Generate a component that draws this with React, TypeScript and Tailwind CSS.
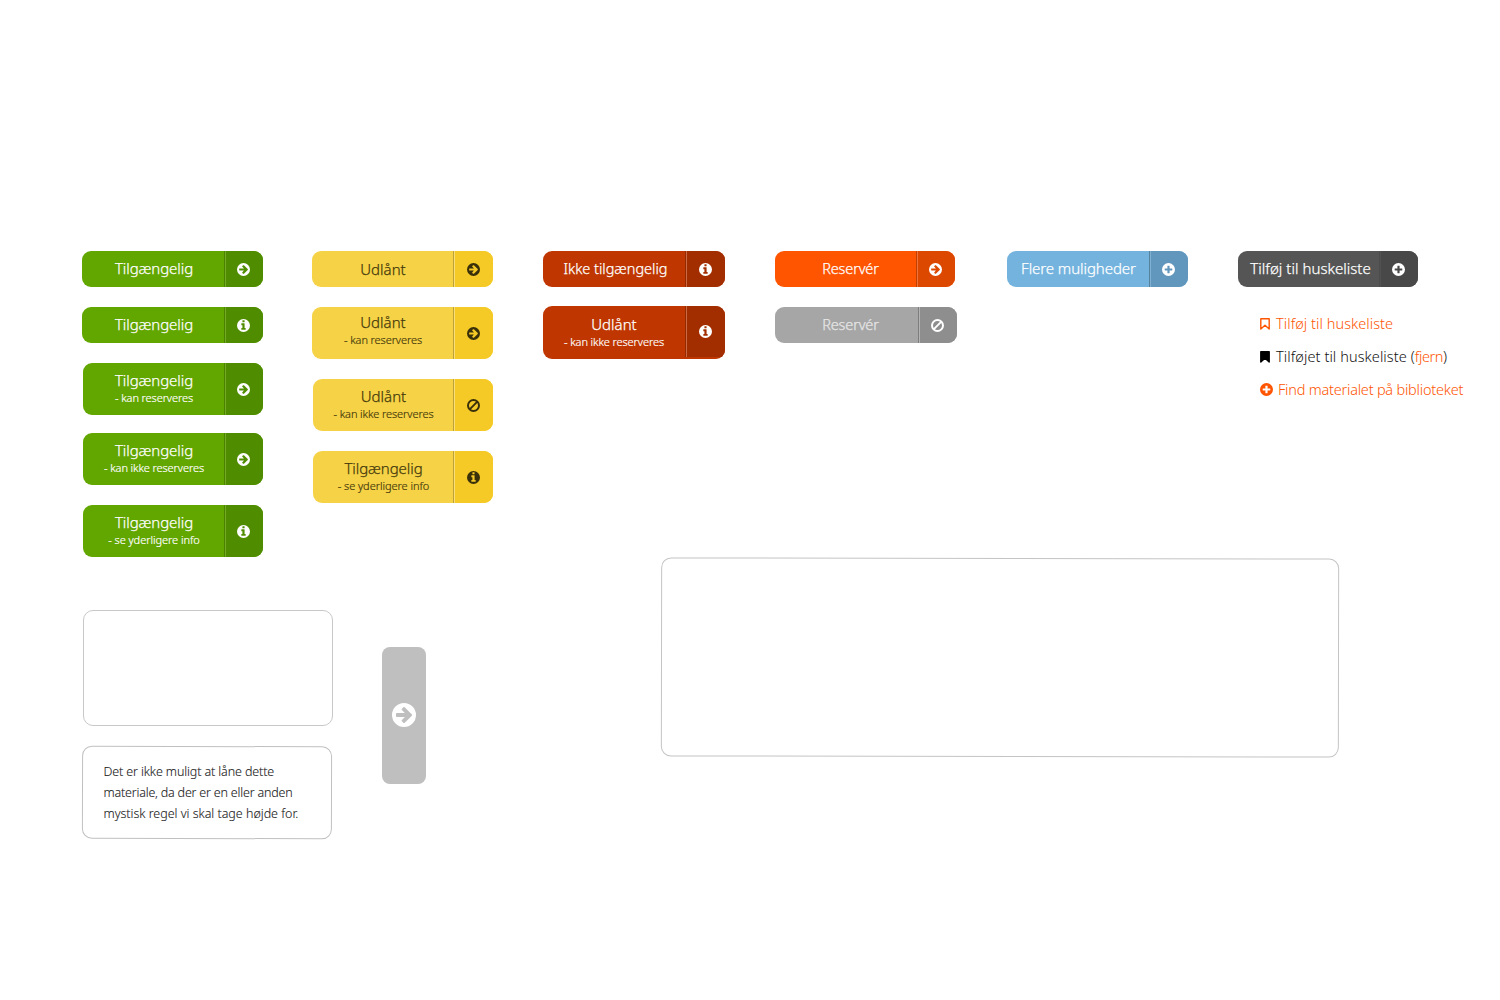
import React from 'react';

const DISC = 'M896 128a768 768 0 1 0 0 1536a768 768 0 1 0 0-1536z';

const GLYPHS = {
  arrow:
    'M1413 896q0-27-18-45l-91-91-362-362q-18-18-45-18t-45 18l-91 91q-18 18-18 45t18 45l189 189h-502q-26 0-45 19t-19 45v128q0 26 19 45t45 19h502l-189 189q-19 19-19 45t19 45l91 91q18 18 45 18t45-18l362-362 91-91q18-18 18-45z',
  info: 'M1152 1376v-160q0-14-9-23t-23-9h-96v-512q0-14-9-23t-23-9h-320q-14 0-23 9t-9 23v160q0 14 9 23t23 9h96v320h-96q-14 0-23 9t-9 23v160q0 14 9 23t23 9h448q14 0 23-9t9-23zM1024 480v-160q0-14-9-23t-23-9h-192q-14 0-23 9t-9 23v160q0 14 9 23t23 9h192q14 0 23-9t9-23z',
  plus: 'M1344 960v-128q0-26-19-45t-45-19h-256v-256q0-26-19-45t-45-19h-128q-26 0-45 19t-19 45v256h-256q-26 0-45 19t-19 45v128q0 26 19 45t45 19h256v256q0 26 19 45t45 19h128q26 0 45-19t19-45v-256h256q26 0 45-19t19-45z',
};

type IconName = keyof typeof GLYPHS | 'ban';

function Icon({ name, className }: { name: IconName; className: string }) {
  if (name === 'ban') {
    return (
      <svg viewBox="128 128 1536 1536" className={className} fill="none" stroke="currentColor" strokeWidth="235">
        <circle cx="896" cy="896" r="650" />
        <path d="M1350 442L442 1350" />
      </svg>
    );
  }
  return (
    <svg viewBox="128 128 1536 1536" className={className} fill="currentColor" fillRule="evenodd">
      <path d={DISC + GLYPHS[name]} />
    </svg>
  );
}

const THEMES = {
  green: { main: 'bg-[#62a600] text-white', side: 'bg-[#508c00] border-[#73ab25]', line: 'bg-[#4b8200]' },
  yellow: { main: 'bg-[#f6d346] text-[#463a0c]', side: 'bg-[#f5ca26] border-[#f9df74]', line: 'bg-[#bea137]' },
  red: { main: 'bg-[#bf3600] text-white', side: 'bg-[#a22e00] border-[#cc6a43]', line: 'bg-[#952a00]' },
  orange: { main: 'bg-[#ff5400] text-white', side: 'bg-[#dc4800] border-[#f2743a]', line: 'bg-[#c14000]' },
  gray: { main: 'bg-[#a6a6a6] text-[#e6e6e6]', side: 'bg-[#8e8e8e] border-[#b4b4b4]', line: 'bg-[#7d7d7d]' },
  blue: { main: 'bg-[#73b3de] text-white', side: 'bg-[#6196bd] border-[#7fb0d2]', line: 'bg-[#55829f]' },
  dark: { main: 'bg-[#555555] text-white', side: 'bg-[#484848] border-[#525252]', line: 'bg-[#4c4c4c]' },
};

type ButtonProps = {
  theme: keyof typeof THEMES;
  icon: IconName;
  title: string;
  sub?: string;
  box: string;
  label?: string;
  titleClass: string;
  subClass?: string;
  side?: string;
};

function Button({
  theme,
  icon,
  title,
  sub,
  box,
  label = 'pt-2 pl-px',
  titleClass,
  subClass = '',
  side = 'w-[38px] pr-[2px]',
}: ButtonProps) {
  const t = THEMES[theme];
  return (
    <button className={`flex overflow-hidden rounded-[9px] ${t.main} ${box}`}>
      <span className={`flex h-full flex-1 flex-col items-center whitespace-nowrap ${label}`}>
        <span className={`leading-[18px] [-webkit-text-stroke:0.25px] ${titleClass}`}>{title}</span>
        {sub && <span className={`mt-px text-[11px] leading-4 [-webkit-text-stroke:0.2px] ${subClass}`}>{sub}</span>}
      </span>
      <span className={`w-px ${t.line} ${sub && theme === 'red' ? 'h-[51px]' : 'h-full'}`} />
      <span
        className={`flex items-center justify-center border-l ${t.side} ${side} ${sub && theme === 'red' ? 'h-[51px]' : 'h-full'}`}
      >
        <Icon name={icon} className={`size-[13px] ${theme === 'yellow' ? 'text-[#3a300a]' : 'text-white'}`} />
      </span>
    </button>
  );
}

function Bookmark({ filled }: { filled?: boolean }) {
  return (
    <svg
      viewBox="0 0 10 12"
      className="h-3 w-2.5"
      fill={filled ? 'currentColor' : 'none'}
      stroke="currentColor"
      strokeWidth="1.4"
      strokeLinejoin="round"
    >
      <path d="M0.8 0.8H9.2V11.1L5 7.2L0.8 11.1Z" />
    </svg>
  );
}

const TILG = 'text-[15px] tracking-[-0.07px]';
const UDL = 'text-[15px] tracking-[0.02px]';
const RES = 'text-[14.5px] tracking-[-0.15px]';
const KAN = 'tracking-[-0.1px]';
const IKKE = 'tracking-[-0.09px]';
const INFO = 'tracking-[-0.05px]';
const YELLOW_SIDE = 'w-[39px] pr-[2px] pt-px';

export default function App() {
  return (
    <main className="flex h-[1000px] w-[1500px] overflow-hidden bg-white pt-[251px] font-['Noto_Sans',sans-serif] font-light">
      <section className="ml-[82px] w-[461px] shrink-0">
        <div className="flex h-[359px]">
          <div className="w-[230px]">
            <Button theme="green" icon="arrow" title="Tilgængelig" titleClass={TILG} label="pt-2 pl-0.5" box="h-9 w-[180.5px]" side="w-[37.5px] pr-[2px]" />
            <Button theme="green" icon="info" title="Tilgængelig" titleClass={TILG} label="pt-2 pl-0.5" box="mt-5 h-9 w-[180.5px]" side="w-[37.5px] pr-[2px]" />
            <Button theme="green" icon="arrow" title="Tilgængelig" sub="- kan reserveres" titleClass={TILG} subClass={KAN} box="mt-5 ml-px h-[52px] w-[180px]" side="w-[38px] pr-[2px] pt-px" />
            <Button theme="green" icon="arrow" title="Tilgængelig" sub="- kan ikke reserveres" titleClass={TILG} subClass={IKKE} box="mt-[18px] ml-px h-[52px] w-[180px]" side="w-[38px] pr-[2px] pt-px" />
            <Button theme="green" icon="info" title="Tilgængelig" sub="- se yderligere info" titleClass={TILG} subClass={INFO} box="mt-5 ml-px h-[52px] w-[180px]" side="w-[38px] pr-[2px] pt-px" />
          </div>
          <div>
            <Button theme="yellow" icon="arrow" title="Udlånt" titleClass={UDL} label="pt-[9px] pl-px" box="h-9 w-[181px]" side={YELLOW_SIDE} />
            <Button theme="yellow" icon="arrow" title="Udlånt" sub="- kan reserveres" titleClass={UDL} subClass={KAN} label="pt-1.5 pl-px" box="mt-5 h-[52px] w-[181px]" side={YELLOW_SIDE} />
            <Button theme="yellow" icon="ban" title="Udlånt" sub="- kan ikke reserveres" titleClass={UDL} subClass={IKKE} box="mt-5 ml-px h-[52px] w-[180px]" side={YELLOW_SIDE} />
            <Button theme="yellow" icon="info" title="Tilgængelig" sub="- se yderligere info" titleClass={TILG} subClass={INFO} box="mt-5 ml-px h-[52px] w-[180px]" side={YELLOW_SIDE} />
          </div>
        </div>
        <div className="flex">
          <div className="w-[300px]">
            <div className="ml-px h-[116px] w-[250px] rounded-[10px] border border-[#c8c8c8]" />
            <div className="mt-5 h-[93px] w-[249.5px] rotate-[0.15deg] rounded-[10px] border-[1.3px] border-[#c0c0c0]" />
            <p className="-mt-[78px] ml-[21.5px] flex flex-col text-[12.5px] leading-[21px] whitespace-nowrap text-[#222] [-webkit-text-stroke:0.1px]">
              <span className="tracking-[-0.12px]">Det er ikke muligt at låne dette</span>
              <span className="tracking-[-0.2px]">materiale, da der er en eller anden</span>
              <span className="tracking-[-0.02px]">mystisk regel vi skal tage højde for.</span>
            </p>
          </div>
          <div className="mt-[37px] flex h-[137px] w-11 items-center justify-center rounded-[8px] bg-[#bfbfbf] pb-0.5 text-white">
            <Icon name="arrow" className="size-6" />
          </div>
        </div>
      </section>

      <section className="w-[957px] shrink-0">
        <div className="flex h-[307px]">
          <div className="w-[232px]">
            <Button theme="red" icon="info" title="Ikke tilgængelig" titleClass="text-[14.5px] tracking-[-0.02px]" label="pt-2 pl-[3px]" box="h-9 w-[182px]" side="w-[39px] pr-[2px]" />
            <Button theme="red" icon="info" title="Udlånt" sub="- kan ikke reserveres" titleClass={UDL} subClass={IKKE} label="pt-[9px]" box="mt-[19px] h-[53px] w-[182px]" side="w-[39px] pr-[2px]" />
          </div>
          <div className="w-[232px]">
            <Button theme="orange" icon="arrow" title="Reservér" titleClass={RES} label="pt-2 pl-2.5" box="h-9 w-[180px]" side="w-[38px] pr-[2px] pt-px" />
            <Button theme="gray" icon="ban" title="Reservér" titleClass={RES} label="pt-2 pl-2" box="mt-5 h-9 w-[182px]" side="w-[38px] pr-[2px] pt-px" />
          </div>
          <div className="w-[231px]">
            <Button theme="blue" icon="plus" title="Flere muligheder" titleClass="text-[15px] tracking-[-0.07px]" box="h-9 w-[181px]" />
          </div>
          <div>
            <Button theme="dark" icon="plus" title="Tilføj til huskeliste" titleClass="text-[15px] tracking-[0.04px]" label="pt-2 pl-1" box="h-9 w-[180px]" />
            <div className="mt-5 ml-[22px] flex flex-col text-[14.5px] leading-[33px] whitespace-nowrap text-[#ff5400]">
              <a className="flex h-[33px] items-center gap-1.5 tracking-[0.06px]">
                <Bookmark />
                <span>Tilføj til huskeliste</span>
              </a>
              <a className="flex h-[33px] items-center gap-1.5 tracking-[0.09px] text-black">
                <Bookmark filled />
                <span className="text-[#111]">
                  Tilføjet til huskeliste (<span className="tracking-[-0.4px] text-[#ff5400]">fjern</span>)
                </span>
              </a>
              <a className="flex h-[33px] items-center gap-[5px] tracking-[-0.22px]">
                <Icon name="plus" className="size-[13px]" />
                <span>Find materialet på biblioteket</span>
              </a>
            </div>
          </div>
        </div>
        <div className="ml-[118px] h-[199px] w-[678px] rotate-[0.1deg] rounded-[10px] border-[1.3px] border-[#c4c4c4]" />
      </section>
    </main>
  );
}
